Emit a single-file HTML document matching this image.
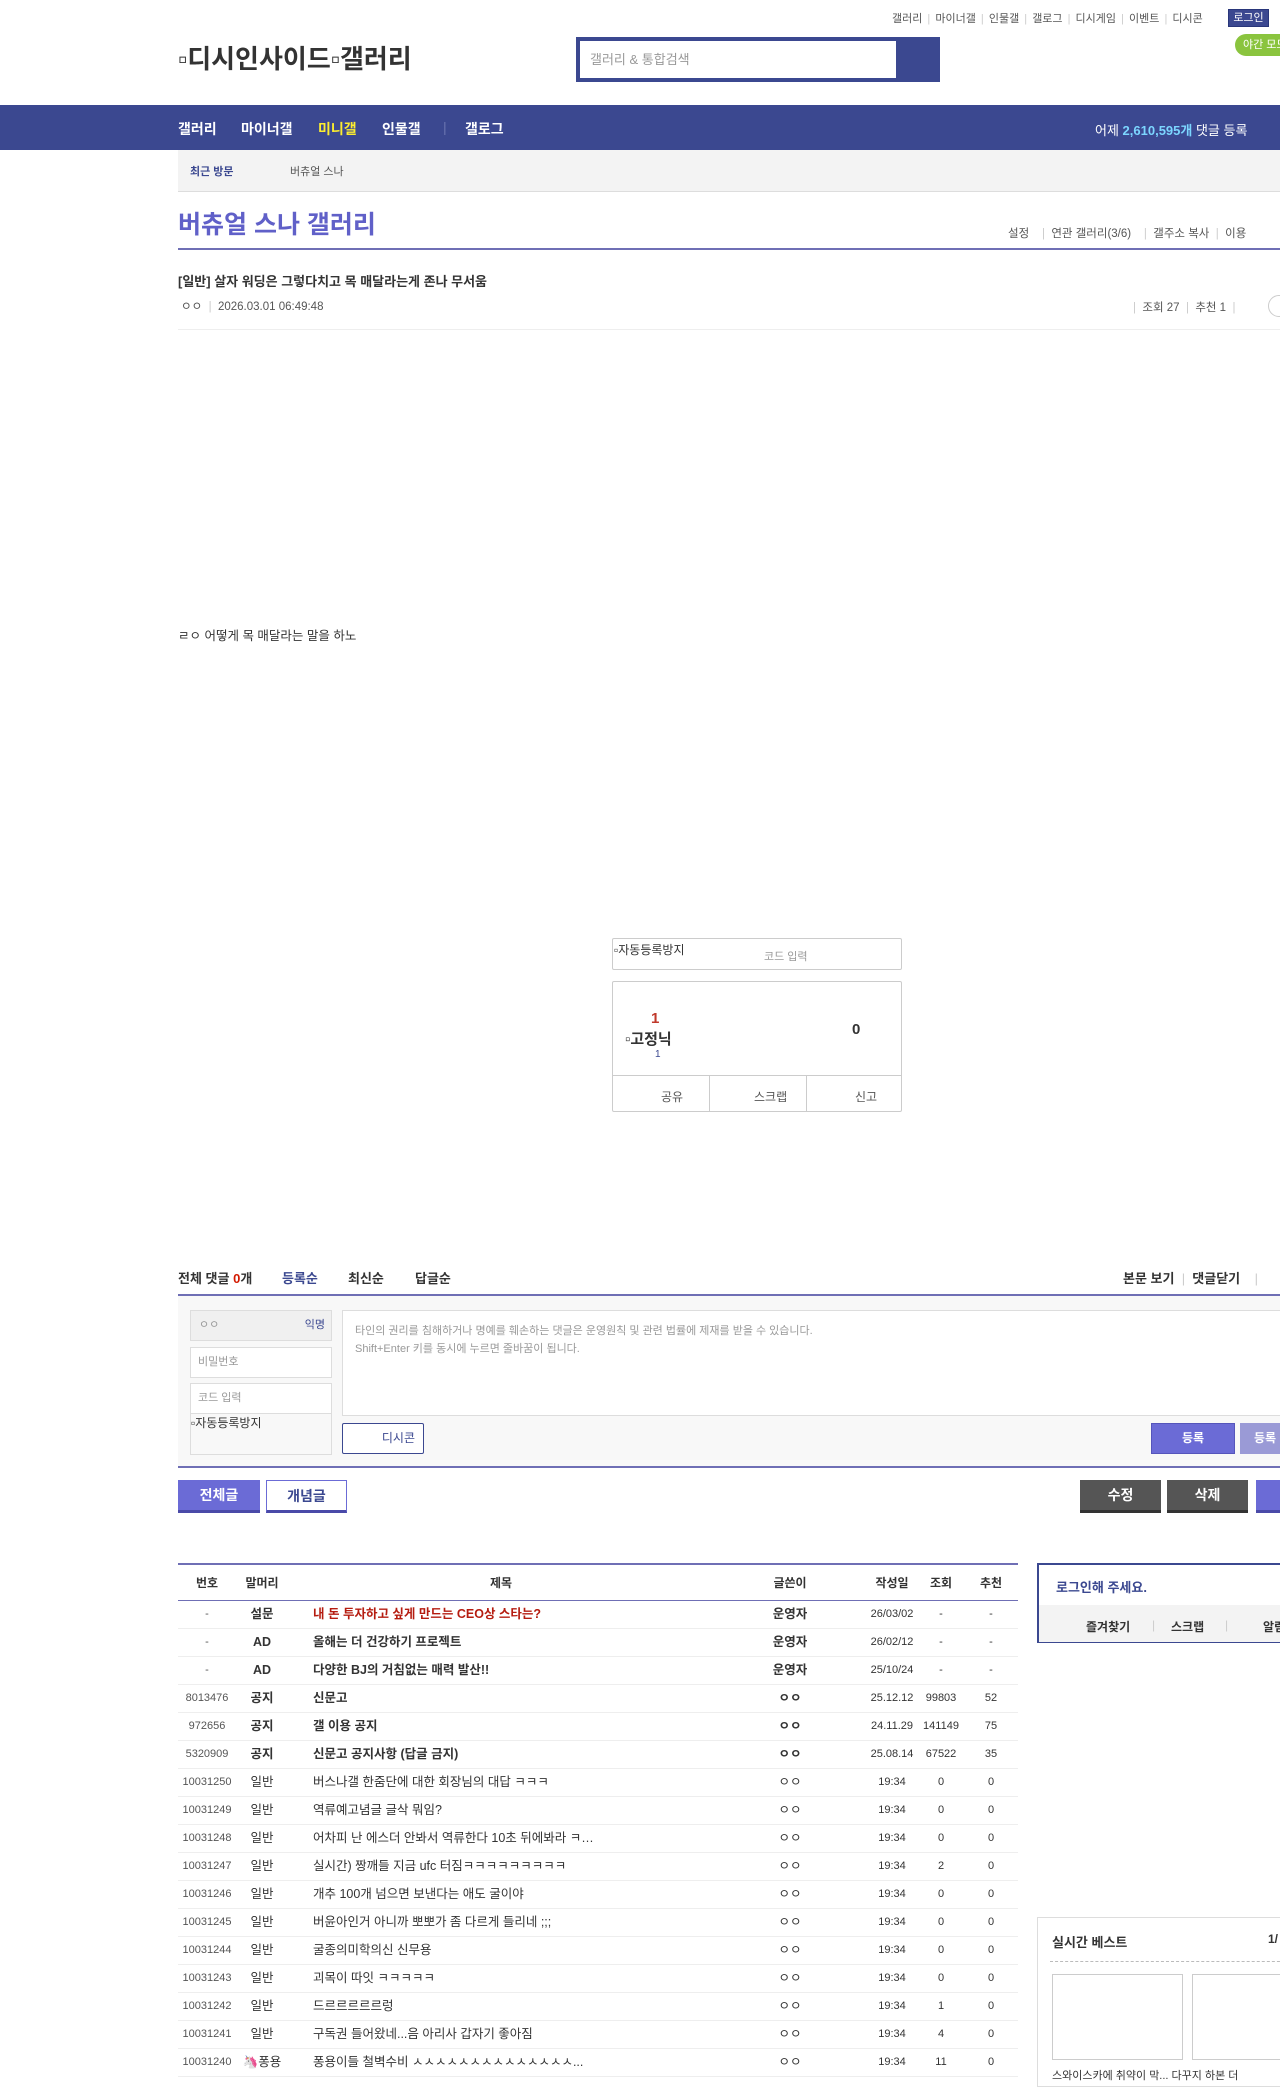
<!DOCTYPE html>
<html><head><meta charset="utf-8">
<style>
*{margin:0;padding:0;box-sizing:border-box}
body{width:1280px;height:2078px;overflow:hidden;position:relative;background:#fff;font-family:"Liberation Sans","Noto Sans CJK KR",sans-serif;color:#333;font-size:12px}
.a{position:absolute;white-space:nowrap}
.top a{color:#555;font-size:11px;margin:0 2px}
.nav{position:absolute;top:119px;color:#fff;font-size:14px;font-weight:bold;white-space:nowrap}
table{border-collapse:collapse;table-layout:fixed}
.lst{position:absolute;left:178px;top:1563px;width:840px;border-top:2px solid #6f6fb5;font-size:12.5px}
.lst th{height:36px;font-weight:bold;color:#333;font-size:12px;border-bottom:1px solid #6f6fb5}
.lst td{height:28px;line-height:16px;vertical-align:middle;border-bottom:1px solid #eee;text-align:center;color:#333;overflow:hidden;white-space:nowrap}
.lst td.n{font-size:11px;color:#555}
.lst td.t{text-align:left;padding-left:25px}
.lst td.d{font-size:11px}
.lst td.v,.lst td.r{font-size:11px}
.btn{position:absolute;height:33px;line-height:31px;text-align:center;font-size:14px;font-weight:bold}
</style></head><body>

<div class="a top" style="left:890px;top:10px;font-size:11px;color:#ccc">
<a>갤러리</a> | <a>마이너갤</a> | <a>인물갤</a> | <a>갤로그</a> | <a>디시게임</a> | <a>이벤트</a> | <a>디시콘</a></div>
<div class="a" style="left:1228px;top:9px;width:41px;height:18px;background:#3b4890;border:1px solid #29367a;color:#fff;font-size:11px;text-align:center;line-height:16px">로그인</div>
<div class="a" style="left:1235px;top:34px;width:60px;height:22px;background:#8ac43e;border-radius:11px;color:#fff;font-size:11px;line-height:22px;padding-left:8px">야간 모드</div>

<div class="a" style="left:178px;top:39px;font-size:26px;font-weight:bold;color:#333">▫디시인사이드▫갤러리</div>
<div class="a" style="left:576px;top:37px;width:364px;height:45px;background:#3b4890"></div>
<div class="a" style="left:580px;top:41px;width:316px;height:37px;background:#fff;color:#999;font-size:13px;line-height:37px;padding-left:10px">갤러리 &amp; 통합검색</div>

<div class="a" style="left:0;top:105px;width:1280px;height:45px;background:#3b4890"></div>
<div class="nav" style="left:178px">갤러리</div>
<div class="nav" style="left:241px">마이너갤</div>
<div class="nav" style="left:318px;color:#fced2f">미니갤</div>
<div class="nav" style="left:382px">인물갤</div>
<div class="nav" style="left:443px;color:#6a74b0;font-weight:normal">|</div>
<div class="nav" style="left:465px">갤로그</div>
<div class="a" style="left:1095px;top:120px;color:#fff;font-size:13px">어제 <b style="color:#7cd6ff">2,610,595개</b> 댓글 등록</div>

<div class="a" style="left:178px;top:150px;width:1102px;height:42px;background:#f3f3f3;border-bottom:1px solid #ddd"></div>
<div class="a" style="left:190px;top:163px;font-size:11px;color:#3b4890;font-weight:bold">최근 방문</div>
<div class="a" style="left:290px;top:163px;font-size:11px;color:#555">버츄얼 스나</div>

<div class="a" style="left:178px;top:205px;font-size:25px;font-weight:bold;color:#6060c8">버츄얼 스나 갤러리</div>
<div class="a" style="left:1008px;top:225px;font-size:11.5px;color:#555">설정 &nbsp;&nbsp;&nbsp;<span style="color:#ccc">|</span>&nbsp; 연관 갤러리(3/6) &nbsp;&nbsp;&nbsp;<span style="color:#ccc">|</span>&nbsp; 갤주소 복사 &nbsp;<span style="color:#ccc">|</span>&nbsp; 이용</div>
<div class="a" style="left:178px;top:248px;width:1102px;height:2px;background:#6f6fb5"></div>

<div class="a" style="left:178px;top:271px;font-size:13px;font-weight:bold;color:#333">[일반] 살자 워딩은 그렇다치고 목 매달라는게 존나 무서움</div>
<div class="a" style="left:181px;top:298px;font-size:11.5px;color:#555">ㅇㅇ &nbsp;<span style="color:#ccc">|</span>&nbsp; 2026.03.01 06:49:48</div>
<div class="a" style="left:1133px;top:299px;font-size:11.5px;color:#555"><span style="color:#ccc">|</span>&nbsp; 조회 27 &nbsp;<span style="color:#ccc">|</span>&nbsp; 추천 1 &nbsp;<span style="color:#ccc">|</span></div>
<div class="a" style="left:1268px;top:295px;width:22px;height:22px;border:1px solid #ccc;border-radius:11px"></div>
<div class="a" style="left:178px;top:329px;width:1102px;height:1px;background:#eee"></div>

<div class="a" style="left:178px;top:625px;font-size:12.5px;color:#333">ㄹㅇ 어떻게 목 매달라는 말을 하노</div>

<div class="a" style="left:612px;top:938px;width:290px;height:32px;border:1px solid #ccc;border-radius:2px"></div>
<div class="a" style="left:614px;top:941px;font-size:12px;color:#333">▫자동등록방지</div>
<div class="a" style="left:764px;top:948px;font-size:11px;color:#999">코드 입력</div>

<div class="a" style="left:612px;top:981px;width:290px;height:131px;border:1px solid #ccc;border-radius:2px"></div>
<div class="a" style="left:651px;top:1010px;font-size:15px;font-weight:bold;color:#c0392b">1</div>
<div class="a" style="left:625px;top:1028px;font-size:15px;font-weight:bold;color:#333">▫고정닉</div>
<div class="a" style="left:655px;top:1049px;font-size:10px;color:#3b4890">1</div>
<div class="a" style="left:852px;top:1021px;font-size:15px;font-weight:bold;color:#333">0</div>
<div class="a" style="left:612px;top:1075px;width:290px;height:1px;background:#ccc"></div>
<div class="a" style="left:709px;top:1075px;width:1px;height:37px;background:#ccc"></div>
<div class="a" style="left:806px;top:1075px;width:1px;height:37px;background:#ccc"></div>
<div class="a" style="left:661px;top:1088px;font-size:12px;color:#555">공유</div>
<div class="a" style="left:754px;top:1088px;font-size:12px;color:#555">스크랩</div>
<div class="a" style="left:855px;top:1088px;font-size:12px;color:#555">신고</div>

<div class="a" style="left:178px;top:1268px;font-size:13px;font-weight:bold;color:#333">전체 댓글 <span style="color:#d31900">0</span>개</div>
<div class="a" style="left:282px;top:1268px;font-size:13px;font-weight:bold;color:#3b4890">등록순</div>
<div class="a" style="left:348px;top:1268px;font-size:13px;font-weight:bold;color:#333">최신순</div>
<div class="a" style="left:415px;top:1268px;font-size:13px;font-weight:bold;color:#333">답글순</div>
<div class="a" style="left:1123px;top:1268px;font-size:13px;font-weight:bold;color:#333">본문 보기 &nbsp;<span style="color:#ccc;font-weight:normal">|</span>&nbsp; 댓글닫기 &nbsp;&nbsp;&nbsp;<span style="color:#ccc;font-weight:normal">|</span></div>
<div class="a" style="left:178px;top:1294px;width:1102px;height:2px;background:#6f6fb5"></div>
<div class="a" style="left:178px;top:1296px;width:1102px;height:170px;background:#f8f8f8"></div>
<div class="a" style="left:190px;top:1310px;width:142px;height:31px;background:#f0f0f0;border:1px solid #ddd;font-size:11px;color:#999;line-height:29px;padding-left:8px">ㅇㅇ<span style="float:right;margin-right:6px;color:#3b4890">익명</span></div>
<div class="a" style="left:190px;top:1347px;width:142px;height:31px;background:#fff;border:1px solid #ddd;font-size:11px;color:#999;line-height:29px;padding-left:7px">비밀번호</div>
<div class="a" style="left:190px;top:1383px;width:142px;height:31px;background:#fff;border:1px solid #ddd;font-size:11px;color:#999;line-height:29px;padding-left:7px">코드 입력</div>
<div class="a" style="left:190px;top:1414px;width:142px;height:41px;border:1px solid #ddd;border-top:none;font-size:12px;color:#333">▫자동등록방지</div>
<div class="a" style="left:342px;top:1310px;width:950px;height:106px;background:#fff;border:1px solid #ddd;font-size:11px;color:#999;padding:11px 12px;line-height:18px">타인의 권리를 침해하거나 명예를 훼손하는 댓글은 운영원칙 및 관련 법률에 제재를 받을 수 있습니다.<br>Shift+Enter 키를 동시에 누르면 줄바꿈이 됩니다.</div>
<div class="a" style="left:342px;top:1423px;width:82px;height:31px;background:#fff;border:1px solid #3b4890;border-radius:2px;font-size:12px;color:#3b4890;line-height:29px;text-align:right;padding-right:8px">디시콘</div>
<div class="a" style="left:1151px;top:1423px;width:84px;height:31px;background:#6b6bd6;border:1px solid #5555bb;color:#fff;font-size:12px;font-weight:bold;line-height:29px;text-align:center">등록</div>
<div class="a" style="left:1240px;top:1423px;width:84px;height:31px;background:#9a9ad6;color:#fff;font-size:12px;font-weight:bold;line-height:31px;padding-left:14px">등록</div>
<div class="a" style="left:178px;top:1466px;width:1102px;height:2px;background:#6f6fb5"></div>

<div class="btn" style="left:178px;top:1480px;width:82px;background:#6b6bd6;color:#fff;border-bottom:3px solid #4a4aa8">전체글</div>
<div class="btn" style="left:266px;top:1480px;width:81px;background:#fff;color:#3b4890;border:1px solid #6b6bd6;border-bottom:3px solid #4a4aa8">개념글</div>
<div class="btn" style="left:1080px;top:1480px;width:81px;background:#555;color:#fff;border-bottom:3px solid #333">수정</div>
<div class="btn" style="left:1167px;top:1480px;width:81px;background:#555;color:#fff;border-bottom:3px solid #333">삭제</div>
<div class="btn" style="left:1256px;top:1480px;width:60px;background:#6b6bd6;color:#fff;border-bottom:3px solid #4a4aa8">글</div>

<table class="lst">
<colgroup><col style="width:58px"><col style="width:52px"><col style="width:426px"><col style="width:152px"><col style="width:52px"><col style="width:46px"><col style="width:54px"></colgroup>
<tr><th>번호</th><th>말머리</th><th>제목</th><th>글쓴이</th><th>작성일</th><th>조회</th><th>추천</th></tr>
<tr><td class="n">-</td><td><b>설문</b></td><td class="t"><b style="color:#b51c10">내 돈 투자하고 싶게 만드는 CEO상 스타는?</b></td><td><b>운영자</b></td><td class="d">26/03/02</td><td class="v">-</td><td class="r">-</td></tr>
<tr><td class="n">-</td><td><b>AD</b></td><td class="t"><b>올해는 더 건강하기 프로젝트</b></td><td><b>운영자</b></td><td class="d">26/02/12</td><td class="v">-</td><td class="r">-</td></tr>
<tr><td class="n">-</td><td><b>AD</b></td><td class="t"><b>다양한 BJ의 거침없는 매력 발산!!</b></td><td><b>운영자</b></td><td class="d">25/10/24</td><td class="v">-</td><td class="r">-</td></tr>
<tr><td class="n">8013476</td><td><b>공지</b></td><td class="t"><b>신문고</b></td><td><b>ㅇㅇ</b></td><td class="d">25.12.12</td><td class="v">99803</td><td class="r">52</td></tr>
<tr><td class="n">972656</td><td><b>공지</b></td><td class="t"><b>갤 이용 공지</b></td><td><b>ㅇㅇ</b></td><td class="d">24.11.29</td><td class="v">141149</td><td class="r">75</td></tr>
<tr><td class="n">5320909</td><td><b>공지</b></td><td class="t"><b>신문고 공지사항 (답글 금지)</b></td><td><b>ㅇㅇ</b></td><td class="d">25.08.14</td><td class="v">67522</td><td class="r">35</td></tr>
<tr><td class="n">10031250</td><td>일반</td><td class="t">버스나갤 한줌단에 대한 회장님의 대답 ㅋㅋㅋ</td><td>ㅇㅇ</td><td class="d">19:34</td><td class="v">0</td><td class="r">0</td></tr>
<tr><td class="n">10031249</td><td>일반</td><td class="t">역류예고념글 글삭 뭐임?</td><td>ㅇㅇ</td><td class="d">19:34</td><td class="v">0</td><td class="r">0</td></tr>
<tr><td class="n">10031248</td><td>일반</td><td class="t">어차피 난 에스더 안봐서 역류한다 10초 뒤에봐라 ㅋ…</td><td>ㅇㅇ</td><td class="d">19:34</td><td class="v">0</td><td class="r">0</td></tr>
<tr><td class="n">10031247</td><td>일반</td><td class="t">실시간) 짱깨들 지금 ufc 터짐ㅋㅋㅋㅋㅋㅋㅋㅋㅋ</td><td>ㅇㅇ</td><td class="d">19:34</td><td class="v">2</td><td class="r">0</td></tr>
<tr><td class="n">10031246</td><td>일반</td><td class="t">개추 100개 넘으면 보낸다는 애도 굴이야</td><td>ㅇㅇ</td><td class="d">19:34</td><td class="v">0</td><td class="r">0</td></tr>
<tr><td class="n">10031245</td><td>일반</td><td class="t">버윤아인거 아니까 뽀뽀가 좀 다르게 들리네 ;;;</td><td>ㅇㅇ</td><td class="d">19:34</td><td class="v">0</td><td class="r">0</td></tr>
<tr><td class="n">10031244</td><td>일반</td><td class="t">굴종의미학의신 신무용</td><td>ㅇㅇ</td><td class="d">19:34</td><td class="v">0</td><td class="r">0</td></tr>
<tr><td class="n">10031243</td><td>일반</td><td class="t">괴목이 따잇 ㅋㅋㅋㅋㅋ</td><td>ㅇㅇ</td><td class="d">19:34</td><td class="v">0</td><td class="r">0</td></tr>
<tr><td class="n">10031242</td><td>일반</td><td class="t">드르르르르르렁</td><td>ㅇㅇ</td><td class="d">19:34</td><td class="v">1</td><td class="r">0</td></tr>
<tr><td class="n">10031241</td><td>일반</td><td class="t">구독권 들어왔네...음 아리사 갑자기 좋아짐</td><td>ㅇㅇ</td><td class="d">19:34</td><td class="v">4</td><td class="r">0</td></tr>
<tr><td class="n">10031240</td><td><span style="color:#e07090">🦄</span>퐁용</td><td class="t">퐁용이들 철벽수비 ㅅㅅㅅㅅㅅㅅㅅㅅㅅㅅㅅㅅㅅㅅ...</td><td>ㅇㅇ</td><td class="d">19:34</td><td class="v">11</td><td class="r">0</td></tr>
</table>

<div class="a" style="left:1037px;top:1563px;width:260px;height:80px;border:2px solid #3b4890;border-bottom-width:1px"></div>
<div class="a" style="left:1056px;top:1577px;font-size:13px;font-weight:bold;color:#3b4890">로그인해 주세요.</div>
<div class="a" style="left:1039px;top:1605px;width:241px;height:37px;background:#f3f3f3"></div>
<div class="a" style="left:1086px;top:1618px;font-size:12px;font-weight:bold;color:#333">즐겨찾기</div>
<div class="a" style="left:1152px;top:1618px;font-size:12px;color:#ccc">|</div>
<div class="a" style="left:1171px;top:1618px;font-size:12px;font-weight:bold;color:#333">스크랩</div>
<div class="a" style="left:1225px;top:1618px;font-size:12px;color:#ccc">|</div>
<div class="a" style="left:1263px;top:1618px;font-size:12px;font-weight:bold;color:#333">알림</div>

<div class="a" style="left:1037px;top:1917px;width:260px;height:170px;border:1px solid #ddd"></div>
<div class="a" style="left:1052px;top:1932px;font-size:13px;font-weight:bold;color:#333">실시간 베스트</div>
<div class="a" style="left:1268px;top:1932px;font-size:12px;font-weight:bold;color:#333">1/</div>
<div class="a" style="left:1050px;top:1961px;width:240px;border-top:1px dashed #bbb"></div>
<div class="a" style="left:1052px;top:1974px;width:131px;height:86px;border:1px solid #ccc"></div>
<div class="a" style="left:1192px;top:1974px;width:100px;height:86px;border:1px solid #ccc"></div>
<div class="a" style="left:1052px;top:2067px;font-size:11px;color:#333">스와이스카에 취약이 막... 다꾸지 하본 더</div>
</body></html>
